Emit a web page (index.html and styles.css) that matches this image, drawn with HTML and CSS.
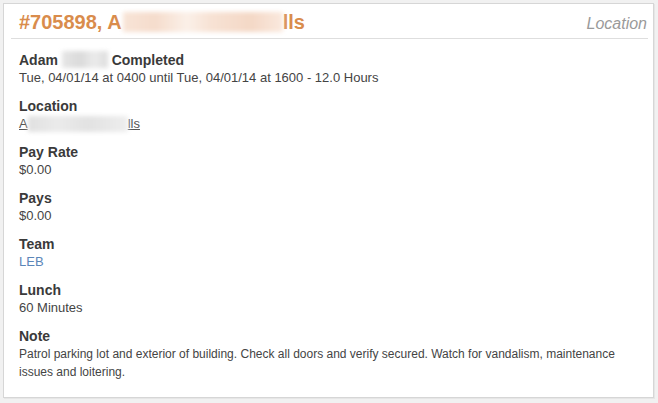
FILE: index.html
```html
<!DOCTYPE html>
<html lang="en">
<head>
  <meta charset="UTF-8" />
  <title>Shift #705898</title>
  <link rel="stylesheet" href="styles.css">
</head>
<body>
  <div class="card">
    <div class="card-head">
      <h1 class="shift-title">#705898, A<span class="redact redact-title"></span>lls</h1>
      <span class="head-tag">Location</span>
    </div>

    <div class="details">
      <div class="field">
        <div class="label">Adam <span class="redact redact-name"></span> Completed</div>
        <div class="value">Tue, 04/01/14 at 0400 until Tue, 04/01/14 at 1600 - 12.0 Hours</div>
      </div>
      <div class="field">
        <div class="label">Location</div>
        <div class="value"><a class="place-link" href="#">A<span class="redact redact-place"></span>lls</a></div>
      </div>
      <div class="field">
        <div class="label">Pay Rate</div>
        <div class="value">$0.00</div>
      </div>
      <div class="field">
        <div class="label">Pays</div>
        <div class="value">$0.00</div>
      </div>
      <div class="field">
        <div class="label">Team</div>
        <div class="value"><a class="team-link" href="#">LEB</a></div>
      </div>
      <div class="field">
        <div class="label">Lunch</div>
        <div class="value">60 Minutes</div>
      </div>
      <div class="field">
        <div class="label">Note</div>
        <div class="value note">Patrol parking lot and exterior of building. Check all doors and verify secured. Watch for vandalism, maintenance issues and loitering.</div>
      </div>
    </div>
  </div>
</body>
</html>
```

FILE: styles.css
```css
body {
  margin: 0;
  padding: 3px 4px 4px 3px;
  background-color: #f1f1f1;
  font-family: "Liberation Sans", Arial, Helvetica, sans-serif;
  color: #333;
}
.card {
  background: #fff;
  border: 1px solid #d6d6d6;
  box-shadow: 1px 1px 0 #e6e6e6;
  padding: 0 5px 0 7px;
}
.card-head {
  display: flex;
  justify-content: space-between;
  align-items: baseline;
  padding: 7px 1px 5px 8px;
  border-bottom: 1px solid #dedede;
}
.shift-title {
  margin: 0;
  font-size: 20px;
  line-height: 22px;
  font-weight: bold;
  color: #d98c4c;
}
.head-tag {
  font-size: 16px;
  font-style: italic;
  color: #9a9a9a;
}
.details {
  padding: 13px 8px 16px;
}
.field {
  margin-bottom: 11px;
}
.field:last-child {
  margin-bottom: 0;
}
.label {
  font-size: 14px;
  line-height: 17px;
  font-weight: bold;
  color: #3a3a3a;
}
.value {
  font-size: 13px;
  line-height: 18px;
  color: #444;
}
.value.note {
  font-size: 12px;
}
.place-link {
  color: #555;
  text-decoration: underline;
}
.team-link {
  color: #5b86b8;
  text-decoration: none;
}
.redact {
  display: inline-block;
  vertical-align: middle;
  filter: blur(2px);
}
.redact-title {
  width: 160px;
  height: 20px;
  margin: -4px 0 0 1px;
  background: linear-gradient(90deg, #f8e4d7 0%, #f5dccc 20%, #fbf0e8 40%, #f7e2d4 55%, #f4d8c6 80%, #fae9de 100%);
}
.redact-name {
  width: 46px;
  height: 17px;
  margin-top: -3px;
  background: linear-gradient(90deg, #e6e6e6, #dadada 40%, #ebebeb 70%, #dedede);
}
.redact-place {
  width: 100px;
  height: 16px;
  margin-top: -2px;
  background: linear-gradient(90deg, #e0e0e0, #ebebeb 30%, #e2e2e2 60%, #eeeeee);
}
```
